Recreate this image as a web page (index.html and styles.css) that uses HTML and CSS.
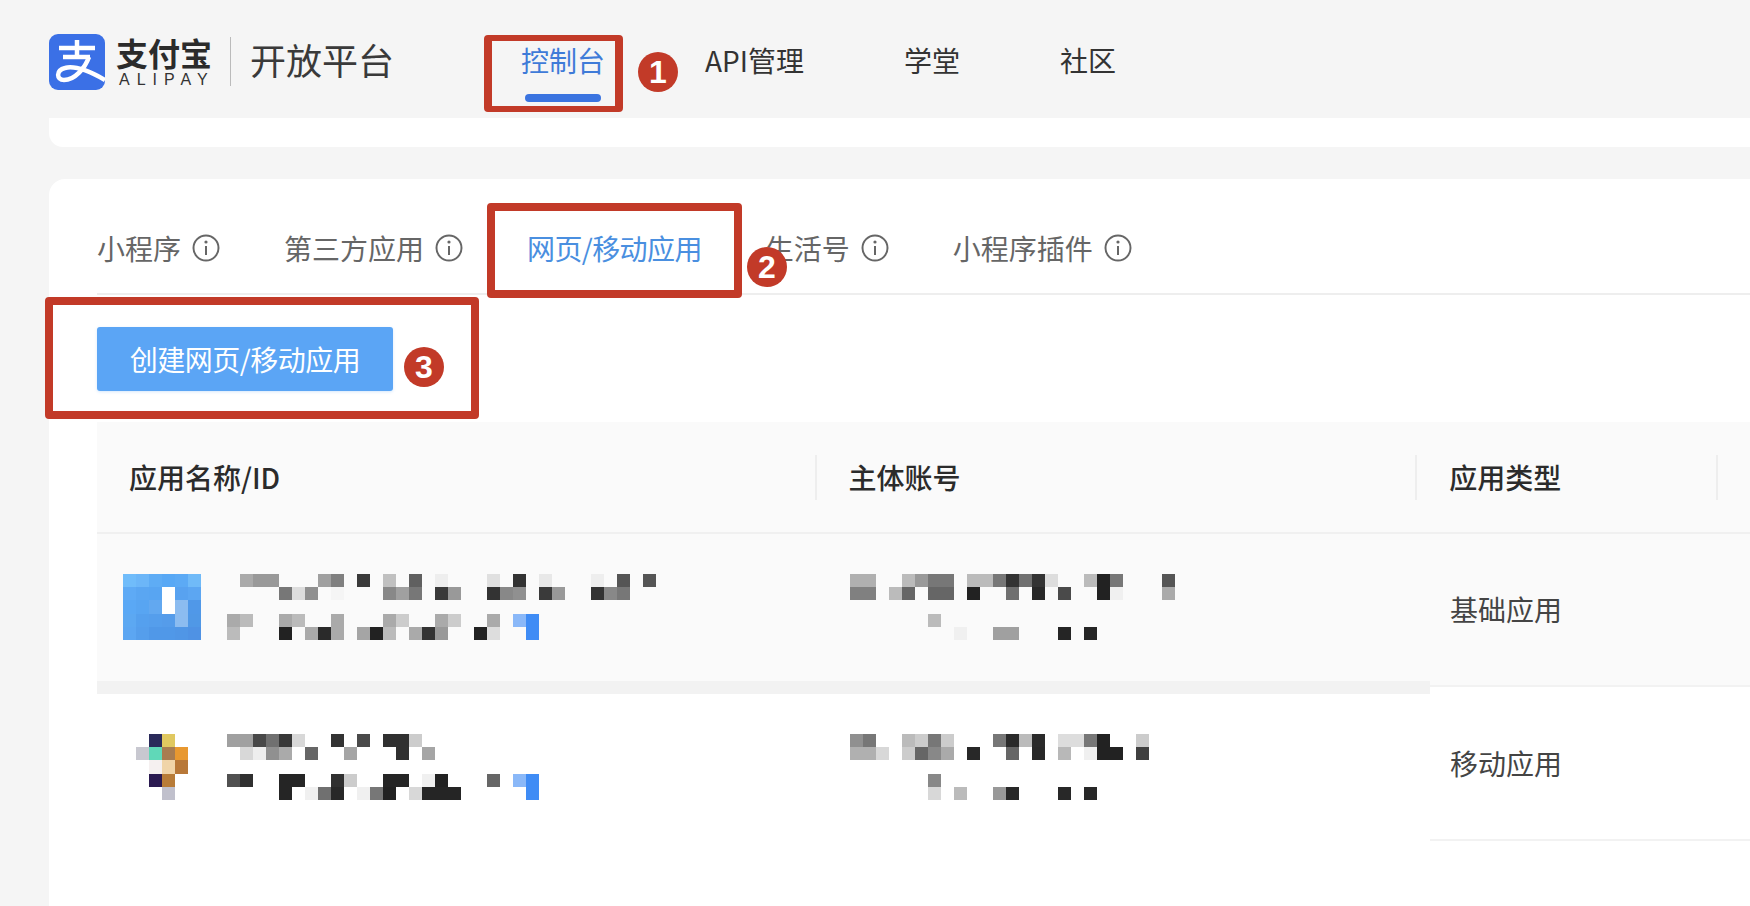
FILE: index.html
```html
<!DOCTYPE html>
<html lang="zh">
  <head>
    <title>支付宝开放平台</title>
    <meta charset="UTF-8" />
    <link rel="stylesheet" href="styles.css">
  </head>
  <body>
    <div class="page">
      <header class="topbar">
        <svg class="logo-mark" viewBox="0 0 56 56">
          <rect class="logo-bg" width="56" height="56" rx="9" />
          <g class="logo-strokes">
            <line x1="10" y1="14" x2="46" y2="14" />
            <line x1="28" y1="6" x2="28" y2="23" />
            <line x1="14" y1="23" x2="41" y2="23" />
            <path d="M40 23C36 34 26 46 15 46C7 46 7 36 16 34C27 31 42 38 56 46" />
          </g>
        </svg>
        <div class="logo-text">
          <div class="logo-cn">支付宝</div>
          <div class="logo-en">ALIPAY</div>
        </div>
        <div class="logo-divider"></div>
        <div class="logo-title">开放平台</div>
        <nav class="nav">
          <a class="nav-item active">控制台</a>
          <a class="nav-item">API管理</a>
          <a class="nav-item">学堂</a>
          <a class="nav-item">社区</a>
        </nav>
      </header>

      <div class="strip"></div>

      <main class="card">
        <div class="tabs">
          <div class="tab">小程序
            <svg class="info" viewBox="0 0 28 28"><circle cx="14" cy="14" r="12.5" /><line x1="14" y1="12" x2="14" y2="21" /><circle class="dot" cx="14" cy="8" r="1.6" /></svg>
          </div>
          <div class="tab">第三方应用
            <svg class="info" viewBox="0 0 28 28"><circle cx="14" cy="14" r="12.5" /><line x1="14" y1="12" x2="14" y2="21" /><circle class="dot" cx="14" cy="8" r="1.6" /></svg>
          </div>
          <div class="tab active">网页/移动应用</div>
          <div class="tab">生活号
            <svg class="info" viewBox="0 0 28 28"><circle cx="14" cy="14" r="12.5" /><line x1="14" y1="12" x2="14" y2="21" /><circle class="dot" cx="14" cy="8" r="1.6" /></svg>
          </div>
          <div class="tab">小程序插件
            <svg class="info" viewBox="0 0 28 28"><circle cx="14" cy="14" r="12.5" /><line x1="14" y1="12" x2="14" y2="21" /><circle class="dot" cx="14" cy="8" r="1.6" /></svg>
          </div>
        </div>

        <button class="create-btn">创建网页/移动应用</button>

        <div class="table">
          <div class="thead">
            <div class="th w-name">应用名称/ID</div>
            <div class="th w-account">主体账号</div>
            <div class="th w-type">应用类型</div>
            <div class="th w-rest"></div>
          </div>
          <div class="tbody">
            <div class="fixed-part">
              <div class="row shaded">
                <div class="app-cell">
                  <svg class="app-icon" viewBox="0 0 6 5" preserveAspectRatio="none">
                    <rect fill="#70bcfa" /><rect x="1" fill="#6cb6f8" /><rect x="2" fill="#5eacf5" /><rect x="3" fill="#58a8f5" /><rect x="4" fill="#5caaf5" /><rect x="5" fill="#70baf8" />
                    <rect y="1" fill="#5eaaf5" /><rect x="1" y="1" fill="#5aa6f2" /><rect x="2" y="1" fill="#58a5f2" /><rect x="3" y="1" fill="#fff" /><rect x="4" y="1" fill="#58a2f0" /><rect x="5" y="1" fill="#5ca6f2" />
                    <rect y="2" fill="#5aa8f5" /><rect x="1" y="2" fill="#58a5f2" /><rect x="2" y="2" fill="#62a8f0" /><rect x="3" y="2" fill="#fff" /><rect x="4" y="2" fill="#8cbcf0" /><rect x="5" y="2" fill="#5098e8" />
                    <rect y="3" fill="#5ca8f2" /><rect x="1" y="3" fill="#55a0ee" /><rect x="2" y="3" fill="#559eec" /><rect x="3" y="3" fill="#559cea" /><rect x="4" y="3" fill="#8cbcf0" /><rect x="5" y="3" fill="#5098e6" />
                    <rect y="4" fill="#5ca6f2" /><rect x="1" y="4" fill="#559eec" /><rect x="2" y="4" fill="#5098e8" /><rect x="3" y="4" fill="#5098e8" /><rect x="4" y="4" fill="#5096e6" /><rect x="5" y="4" fill="#4f92e4" />
                  </svg>
                  <svg class="mosaic name" viewBox="0 0 33 5" preserveAspectRatio="none">
                    <rect x="1" fill="#aaa" /><rect x="2" fill="#999" /><rect x="3" fill="#999" /><rect x="7" fill="#a0a0a0" /><rect x="8" fill="#808080" /><rect x="10" fill="#3a3a3a" /><rect x="12" fill="#c0c0c0" /><rect x="14" fill="#606060" /><rect x="16" fill="#eee" /><rect x="20" fill="#e0e0e0" /><rect x="22" fill="#333" /><rect x="24" fill="#e8e8e8" /><rect x="28" fill="#eee" /><rect x="30" fill="#555" /><rect x="32" fill="#555" />
                    <rect x="4" y="1" fill="#777" /><rect x="5" y="1" fill="#ddd" /><rect x="6" y="1" fill="#909090" /><rect x="8" y="1" fill="#f5f5f5" /><rect x="12" y="1" fill="#888" /><rect x="13" y="1" fill="#a0a0a0" /><rect x="14" y="1" fill="#777" /><rect x="16" y="1" fill="#3a3a3a" /><rect x="17" y="1" fill="#999" /><rect x="20" y="1" fill="#333" /><rect x="21" y="1" fill="#888" /><rect x="22" y="1" fill="#909090" /><rect x="24" y="1" fill="#3a3a3a" /><rect x="25" y="1" fill="#999" /><rect x="28" y="1" fill="#333" /><rect x="29" y="1" fill="#888" /><rect x="30" y="1" fill="#777" />
                    <rect y="3" fill="#aaa" /><rect x="1" y="3" fill="#bbb" /><rect x="4" y="3" fill="#aaa" /><rect x="5" y="3" fill="#bbb" /><rect x="8" y="3" fill="#aaa" /><rect x="12" y="3" fill="#aaa" /><rect x="13" y="3" fill="#ccc" /><rect x="16" y="3" fill="#aaa" /><rect x="17" y="3" fill="#ccc" /><rect x="20" y="3" fill="#aaa" /><rect x="22" y="3" fill="#8ab8f8" /><rect x="23" y="3" fill="#3f8cf5" />
                    <rect y="4" fill="#bbb" /><rect x="4" y="4" fill="#222" /><rect x="6" y="4" fill="#aaa" /><rect x="7" y="4" fill="#2a2a2a" /><rect x="8" y="4" fill="#aaa" /><rect x="10" y="4" fill="#a5a5a5" /><rect x="11" y="4" fill="#222" /><rect x="12" y="4" fill="#bbb" /><rect x="14" y="4" fill="#aaa" /><rect x="15" y="4" fill="#333" /><rect x="16" y="4" fill="#999" /><rect x="19" y="4" fill="#222" /><rect x="20" y="4" fill="#ddd" /><rect x="23" y="4" fill="#3f8cf5" />
                  </svg>
                </div>
                <div class="account-cell">
                  <svg class="mosaic account" viewBox="0 0 25 5" preserveAspectRatio="none">
                    <rect fill="#b0b0b0" /><rect x="1" fill="#b0b0b0" /><rect x="4" fill="#bbb" /><rect x="5" fill="#999" /><rect x="6" fill="#777" /><rect x="7" fill="#777" /><rect x="9" fill="#bbb" /><rect x="10" fill="#bbb" /><rect x="11" fill="#777" /><rect x="12" fill="#333" /><rect x="13" fill="#707070" /><rect x="14" fill="#333" /><rect x="15" fill="#ddd" /><rect x="18" fill="#bbb" /><rect x="19" fill="#222" /><rect x="20" fill="#777" /><rect x="24" fill="#555" />
                    <rect y="1" fill="#808080" /><rect x="1" y="1" fill="#808080" /><rect x="3" y="1" fill="#bbb" /><rect x="4" y="1" fill="#666" /><rect x="6" y="1" fill="#666" /><rect x="7" y="1" fill="#666" /><rect x="9" y="1" fill="#222" /><rect x="12" y="1" fill="#707070" /><rect x="14" y="1" fill="#282828" /><rect x="16" y="1" fill="#4a4a4a" /><rect x="19" y="1" fill="#222" /><rect x="20" y="1" fill="#f0f0f0" /><rect x="24" y="1" fill="#aaa" />
                    <rect x="6" y="3" fill="#bbb" />
                    <rect x="8" y="4" fill="#f0f0f0" /><rect x="11" y="4" fill="#a0a0a0" /><rect x="12" y="4" fill="#a0a0a0" /><rect x="16" y="4" fill="#252525" /><rect x="18" y="4" fill="#252525" />
                  </svg>
                </div>
              </div>
              <div class="row-gap"></div>
              <div class="row">
                <div class="app-cell">
                  <svg class="app-icon" viewBox="0 0 6 5" preserveAspectRatio="none">
                    <rect x="2" fill="#2a2a5a" /><rect x="3" fill="#e0c860" />
                    <rect x="1" y="1" fill="#c8c8d0" /><rect x="2" y="1" fill="#60d8b8" /><rect x="3" y="1" fill="#a87c50" /><rect x="4" y="1" fill="#e89830" />
                    <rect x="2" y="2" fill="#f5f0f0" /><rect x="3" y="2" fill="#f0d4a8" /><rect x="4" y="2" fill="#b87838" />
                    <rect x="2" y="3" fill="#2a1a50" /><rect x="3" y="3" fill="#b87c38" />
                    <rect x="3" y="4" fill="#c0c0cc" />
                  </svg>
                  <svg class="mosaic name" viewBox="0 0 33 5" preserveAspectRatio="none">
                    <rect fill="#a0a0a0" /><rect x="1" fill="#a0a0a0" /><rect x="2" fill="#484848" /><rect x="3" fill="#707070" /><rect x="4" fill="#383838" /><rect x="5" fill="#d8d8d8" /><rect x="8" fill="#333" /><rect x="10" fill="#4a4a4a" /><rect x="12" fill="#303030" /><rect x="13" fill="#303030" /><rect x="14" fill="#ccc" />
                    <rect x="1" y="1" fill="#d8d8d8" /><rect x="2" y="1" fill="#eee" /><rect x="3" y="1" fill="#909090" /><rect x="4" y="1" fill="#aaa" /><rect x="6" y="1" fill="#666" /><rect x="9" y="1" fill="#a5a5a5" /><rect x="13" y="1" fill="#303030" /><rect x="15" y="1" fill="#a5a5a5" />
                    <rect y="3" fill="#505050" /><rect x="1" y="3" fill="#303030" /><rect x="4" y="3" fill="#252525" /><rect x="5" y="3" fill="#252525" /><rect x="8" y="3" fill="#303030" /><rect x="9" y="3" fill="#ccc" /><rect x="12" y="3" fill="#252525" /><rect x="13" y="3" fill="#252525" /><rect x="15" y="3" fill="#f0f0f0" /><rect x="16" y="3" fill="#222" /><rect x="20" y="3" fill="#666" /><rect x="22" y="3" fill="#8ab8f8" /><rect x="23" y="3" fill="#3f8cf5" />
                    <rect x="4" y="4" fill="#252525" /><rect x="6" y="4" fill="#f0f0f0" /><rect x="7" y="4" fill="#707070" /><rect x="8" y="4" fill="#282828" /><rect x="10" y="4" fill="#f0f0f0" /><rect x="11" y="4" fill="#777" /><rect x="12" y="4" fill="#222" /><rect x="14" y="4" fill="#d8d8d8" /><rect x="15" y="4" fill="#252525" /><rect x="16" y="4" fill="#252525" /><rect x="17" y="4" fill="#252525" /><rect x="23" y="4" fill="#3f8cf5" />
                  </svg>
                </div>
                <div class="account-cell">
                  <svg class="mosaic account" viewBox="0 0 25 5" preserveAspectRatio="none">
                    <rect fill="#909090" /><rect x="1" fill="#777" /><rect x="4" fill="#bbb" /><rect x="5" fill="#ccc" /><rect x="6" fill="#777" /><rect x="7" fill="#ccc" /><rect x="11" fill="#777" /><rect x="12" fill="#2a2a2a" /><rect x="13" fill="#bbb" /><rect x="14" fill="#2a2a2a" /><rect x="16" fill="#ddd" /><rect x="17" fill="#ddd" /><rect x="18" fill="#777" /><rect x="19" fill="#222" /><rect x="22" fill="#ccc" />
                    <rect y="1" fill="#b0b0b0" /><rect x="1" y="1" fill="#b0b0b0" /><rect x="2" y="1" fill="#d8d8d8" /><rect x="4" y="1" fill="#ccc" /><rect x="5" y="1" fill="#666" /><rect x="6" y="1" fill="#888" /><rect x="7" y="1" fill="#aaa" /><rect x="9" y="1" fill="#282828" /><rect x="12" y="1" fill="#666" /><rect x="14" y="1" fill="#282828" /><rect x="16" y="1" fill="#b8b8b8" /><rect x="18" y="1" fill="#f0f0f0" /><rect x="19" y="1" fill="#222" /><rect x="20" y="1" fill="#222" /><rect x="22" y="1" fill="#404040" />
                    <rect x="6" y="3" fill="#888" />
                    <rect x="6" y="4" fill="#d8d8d8" /><rect x="8" y="4" fill="#bbb" /><rect x="11" y="4" fill="#999" /><rect x="12" y="4" fill="#282828" /><rect x="16" y="4" fill="#282828" /><rect x="18" y="4" fill="#282828" />
                  </svg>
                </div>
              </div>
            </div>
            <div class="scroll-part">
              <div class="type-cell shaded">基础应用</div>
              <div class="type-cell">移动应用</div>
            </div>
          </div>
        </div>
      </main>

      <!-- annotations drawn over the screenshot -->
      <div class="mark mark-1"></div>
      <div class="mark mark-2"></div>
      <div class="mark mark-3"></div>
      <div class="badge badge-1">1</div>
      <div class="badge badge-2">2</div>
      <div class="badge badge-3">3</div>
    </div>
  </body>
</html>
```

FILE: styles.css
```css
body {
  margin: 0;
  background: #f5f5f5;
  font-family: "Noto Sans CJK SC", "Noto Sans", sans-serif;
  color: #333;
}
.page {
  position: relative;
  height: 906px;
  overflow: hidden;
}

/* top bar */
.topbar {
  display: flex;
  align-items: flex-start;
  height: 118px;
  padding-left: 49px;
  box-sizing: border-box;
}
.logo-mark {
  width: 56px;
  height: 56px;
  margin-top: 34px;
  flex: none;
}
.logo-bg {
  fill: #3b70e6;
}
.logo-strokes line,
.logo-strokes path {
  fill: none;
  stroke: #fff;
  stroke-width: 4.5;
}
.logo-text {
  width: 96px;
  margin: 33px 0 0 11px;
  flex: none;
}
.logo-cn {
  font-size: 32px;
  font-weight: 700;
  line-height: 38px;
  color: #2b2b2b;
  white-space: nowrap;
}
.logo-en {
  font-family: "Liberation Sans", sans-serif;
  font-size: 16px;
  line-height: 18px;
  letter-spacing: 7px;
  margin-left: 3px;
  white-space: nowrap;
}
.logo-divider {
  width: 1px;
  height: 49px;
  margin: 37px 0 0 18px;
  background: #bbb;
}
.logo-title {
  font-size: 36px;
  line-height: 52px;
  margin: 33px 0 0 19px;
  color: #3a3a3a;
  white-space: nowrap;
}
.nav {
  display: flex;
  gap: 100px;
  margin-left: 127px;
  padding-top: 41px;
}
.nav-item {
  font-size: 28px;
  line-height: 38px;
  color: #333;
  white-space: nowrap;
}
.nav-item.active {
  color: #3f7bd8;
}
.nav-item.active::after {
  content: "";
  display: block;
  width: 76px;
  height: 8px;
  margin: 15px auto 0;
  border-radius: 4px;
  background: #3b74e0;
}

.strip {
  height: 29px;
  margin-left: 49px;
  background: #fff;
  border-bottom-left-radius: 14px;
}

/* main card */
.card {
  height: 727px;
  margin: 32px 0 0 49px;
  padding-left: 48px;
  background: #fff;
  border-top-left-radius: 16px;
}
.tabs {
  display: flex;
  gap: 64px;
  padding: 50px 0 26px;
  border-bottom: 2px solid #eee;
}
.tab {
  display: flex;
  align-items: center;
  gap: 11px;
  font-size: 28px;
  line-height: 38px;
  color: #666;
  white-space: nowrap;
}
.tab.active {
  color: #4a8fe0;
  letter-spacing: -0.6px;
}
.info {
  width: 28px;
  height: 28px;
  fill: none;
  stroke: #666;
  stroke-width: 2;
}
.info .dot {
  fill: #666;
  stroke: none;
}
.create-btn {
  display: block;
  width: 296px;
  height: 64px;
  margin-top: 32px;
  padding: 0;
  border: 0;
  border-radius: 3px;
  background: #5ba5f5;
  box-shadow: 0 1px 3px rgba(91, 165, 245, 0.25);
  color: #fff;
  font-family: inherit;
  font-size: 28px;
  letter-spacing: -0.5px;
}

/* table */
.table {
  margin-top: 31px;
}
.thead {
  display: flex;
  align-items: center;
  height: 112px;
  box-sizing: border-box;
  background: #fafafa;
  border-bottom: 2px solid #f0f0f0;
}
.th {
  display: flex;
  align-items: center;
  font-size: 28px;
  font-weight: 500;
  line-height: 38px;
  color: #2b2b2b;
  box-sizing: border-box;
}
.th + .th::before {
  content: "";
  width: 2px;
  height: 45px;
  margin-right: 32px;
  background: #eee;
}
.w-name {
  width: 718px;
  padding-left: 32px;
}
.w-account {
  width: 601px;
}
.w-type {
  width: 301px;
}
.w-rest {
  flex: 1;
}
.tbody {
  display: flex;
}
.fixed-part {
  width: 1333px;
  flex: none;
}
.scroll-part {
  flex: 1;
}
.row {
  display: flex;
  height: 147px;
  padding-top: 40px;
  box-sizing: border-box;
}
.shaded {
  background: #fafafa;
}
.row-gap {
  height: 13px;
  background: #f2f2f2;
}
.app-cell {
  display: flex;
  gap: 26px;
  width: 718px;
  padding-left: 26px;
  box-sizing: border-box;
}
.account-cell {
  padding-left: 35px;
}
.app-icon {
  width: 78px;
  height: 66px;
  flex: none;
}
.mosaic {
  height: 66px;
  flex: none;
}
.mosaic.name {
  width: 429px;
}
.mosaic.account {
  width: 325px;
}
.app-icon rect,
.mosaic rect {
  width: 1px;
  height: 1px;
  shape-rendering: crispEdges;
}
.type-cell {
  display: flex;
  align-items: center;
  height: 154px;
  padding-left: 20px;
  box-sizing: border-box;
  border-bottom: 2px solid #f2f2f2;
  font-size: 28px;
  color: #444;
}
.type-cell.shaded {
  height: 153px;
  padding-bottom: 2px;
}

/* red annotations */
.mark {
  position: absolute;
  box-sizing: border-box;
  border: 8px solid #c23a28;
  border-radius: 4px;
}
.mark-1 {
  left: 484px;
  top: 35px;
  width: 139px;
  height: 77px;
  border-width: 6px 8px;
}
.mark-2 {
  left: 487px;
  top: 203px;
  width: 255px;
  height: 95px;
}
.mark-3 {
  left: 45px;
  top: 297px;
  width: 434px;
  height: 122px;
}
.badge {
  position: absolute;
  width: 40px;
  height: 40px;
  border-radius: 50%;
  background: #c23a28;
  color: #fff;
  font-family: "Liberation Sans", sans-serif;
  font-size: 32px;
  font-weight: 700;
  line-height: 40px;
  text-align: center;
}
.badge-1 {
  left: 638px;
  top: 52px;
}
.badge-2 {
  left: 747px;
  top: 247px;
}
.badge-3 {
  left: 404px;
  top: 347px;
}
```
